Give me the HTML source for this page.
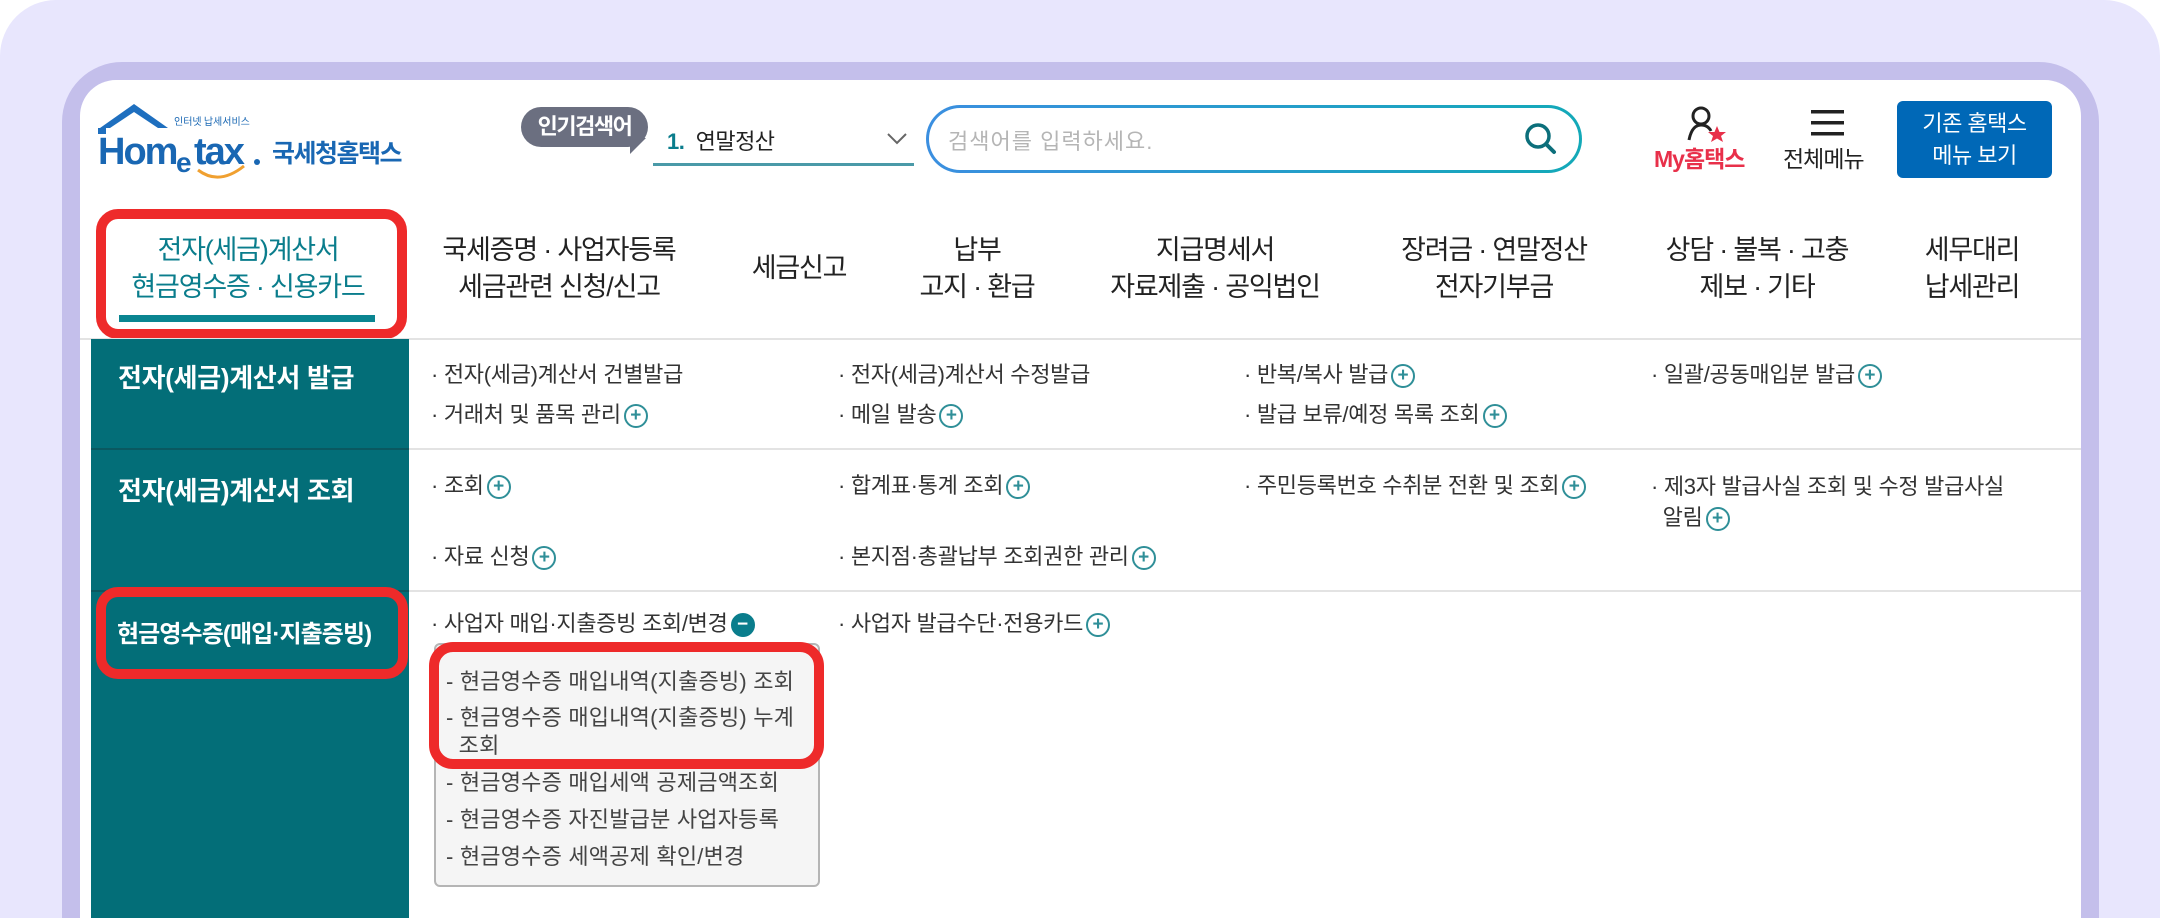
<!DOCTYPE html>
<html><head><meta charset="utf-8"><style>
*{margin:0;padding:0;box-sizing:border-box}
html,body{width:2160px;height:918px;overflow:hidden}
body{background:#fff;font-family:"Liberation Sans","Noto Sans CJK KR",sans-serif;position:relative}
#w{position:absolute;left:0;top:0;width:2160px;height:918px;overflow:hidden}
.a{position:absolute;white-space:nowrap}
.bg{left:0;top:0;width:2160px;height:918px;background:#e8e6fd;border-radius:56px 56px 0 0}
.frame{left:62px;top:62px;width:2037px;height:856px;background:#c4bfeb;border-radius:60px 60px 0 0}
.card{left:80px;top:80px;width:2001px;height:838px;background:#fff;border-radius:36px 36px 0 0}
.nav{font-size:27px;color:#222;text-align:center;line-height:37px;letter-spacing:-1.2px;transform:translateX(-50%)}
.side{left:91px;top:339px;width:318px;height:579px;background:#036e78}
.lbl{color:#fff;font-weight:bold;font-size:26px;letter-spacing:-0.3px}
.it{font-size:22px;color:#333;letter-spacing:-0.3px;line-height:30px}
.pl{display:inline-block;width:24px;height:24px;border:2px solid #2f8f98;border-radius:50%;color:#2f8f98;font-size:19px;line-height:20px;text-align:center;vertical-align:middle;margin-left:3px;letter-spacing:0;font-weight:bold}
.mi{background:#0a7d8c;color:#fff;border-color:#0a7d8c}
.hl{height:2px;background:#e3e3e3}
.sub{left:434px;top:643px;width:386px;height:244px;background:#f5f5f5;border:2px solid #b5b5b5;border-radius:6px}
.si{font-size:22px;color:#444;letter-spacing:0.2px;left:446px}
.red{border:10px solid #ee2a2a;border-radius:22px}
</style></head><body><div id="w">
<div class="a bg"></div>
<div class="a frame"></div>
<div class="a card"></div>

<svg class="a" style="left:94px;top:100px" width="330" height="84" viewBox="0 0 330 84">
<polygon points="6,28 40,4 74,28 64,28 40,12 16,28" fill="#1e6fbf"/>
<rect x="4" y="28" width="8" height="6" fill="#1e6fbf"/>
<text x="4" y="64" font-family="Liberation Sans" font-weight="bold" font-size="38" fill="#1967b3" letter-spacing="-2">Hom</text>
<text x="82" y="72" font-family="Liberation Sans" font-weight="bold" font-size="28" fill="#1967b3">e</text>
<text x="100" y="64" font-family="Liberation Sans" font-weight="bold" font-size="38" fill="#1967b3" letter-spacing="-2">tax</text>
<circle cx="163" cy="62" r="3" fill="#1967b3"/>
<path d="M104 70 Q125 86 150 66" stroke="#f0a030" stroke-width="3" fill="none"/>
<text x="80" y="25" font-family="Noto Sans CJK KR" font-size="10" fill="#1967b3">인터넷 납세서비스</text>
<text x="178" y="62" font-family="Noto Sans CJK KR" font-weight="bold" font-size="25" fill="#1967b3" letter-spacing="-1.5">국세청홈택스</text>
</svg>

<div class="a" style="left:521px;top:107px;width:127px;height:40px;background:#6b6f80;border-radius:20px;color:#fff;font-size:22px;font-weight:bold;text-align:center;line-height:40px;letter-spacing:-1.5px">인기검색어</div>
<div class="a" style="left:630px;top:138px;width:0;height:0;border-left:16px solid #6b6f80;border-bottom:16px solid transparent"></div>
<div class="a" style="left:667px;top:124px;font-size:22px;color:#222;letter-spacing:-0.5px"><b style="color:#0a7d8c">1.</b>&nbsp; 연말정산</div>
<svg class="a" style="left:886px;top:132px" width="22" height="14"><path d="M2 2 L11 11 L20 2" stroke="#666" stroke-width="2" fill="none"/></svg>
<div class="a" style="left:653px;top:163px;width:261px;height:3px;background:#4a9aa8"></div>

<div class="a" style="left:926px;top:105px;width:656px;height:68px;border-radius:34px;background:linear-gradient(90deg,#3b8fe0,#13a9b8);padding:3px"><div style="width:100%;height:100%;background:#fff;border-radius:31px"></div></div>
<div class="a" style="left:948px;top:124px;font-size:22px;color:#b5b5b5;letter-spacing:1px">검색어를 입력하세요.</div>
<svg class="a" style="left:1522px;top:120px" width="38" height="38"><circle cx="16" cy="16" r="11" stroke="#0c6f7b" stroke-width="3.5" fill="none"/><path d="M24 24 L32 32" stroke="#0c6f7b" stroke-width="4" stroke-linecap="round"/></svg>

<svg class="a" style="left:1686px;top:104px" width="44" height="42"><circle cx="15" cy="12" r="8" stroke="#222" stroke-width="3" fill="none"/><path d="M3 36 Q6 21 15 21 Q22 21 25 27" stroke="#222" stroke-width="3" fill="none"/><polygon points="31,22 33.5,28 40,28 35,32 37,38 31,34.5 25,38 27,32 22,28 28.5,28" fill="#e8304a"/></svg>
<div class="a" style="left:1654px;top:140px;font-size:23px;color:#e8304a;font-weight:bold;letter-spacing:-1px">My홈택스</div>
<svg class="a" style="left:1810px;top:108px" width="36" height="30"><rect x="1" y="2" width="33" height="3.5" fill="#222"/><rect x="1" y="13" width="33" height="3.5" fill="#222"/><rect x="1" y="24" width="33" height="3.5" fill="#222"/></svg>
<div class="a" style="left:1783px;top:140px;font-size:23px;color:#222;letter-spacing:-1px">전체메뉴</div>
<div class="a" style="left:1897px;top:101px;width:155px;height:77px;background:#0068b7;border-radius:6px;color:#fff;font-size:22px;text-align:center;line-height:32px;padding-top:7px;letter-spacing:-0.5px">기존 홈택스<br>메뉴 보기</div>

<div class="a nav" style="left:248px;top:232px;color:#0a7d8c">전자(세금)계산서<br>현금영수증 · 신용카드</div>
<div class="a" style="left:119px;top:315px;width:256px;height:7px;background:#0a8591"></div>
<div class="a red" style="left:96px;top:209px;width:311px;height:130px"></div>
<div class="a nav" style="left:559px;top:232px">국세증명 · 사업자등록<br>세금관련 신청/신고</div>
<div class="a nav" style="left:799px;top:250px">세금신고</div>
<div class="a nav" style="left:977px;top:232px">납부<br>고지 · 환급</div>
<div class="a nav" style="left:1215px;top:232px">지급명세서<br>자료제출 · 공익법인</div>
<div class="a nav" style="left:1494px;top:232px">장려금 · 연말정산<br>전자기부금</div>
<div class="a nav" style="left:1757px;top:232px">상담 · 불복 · 고충<br>제보 · 기타</div>
<div class="a nav" style="left:1972px;top:232px">세무대리<br>납세관리</div>

<div class="a hl" style="left:80px;top:338px;width:2001px"></div>
<div class="a side"></div>
<div class="a" style="left:91px;top:448px;width:318px;height:2px;background:#0a5860"></div>
<div class="a" style="left:91px;top:590px;width:318px;height:2px;background:#0a5860"></div>
<div class="a hl" style="left:409px;top:448px;width:1672px"></div>
<div class="a hl" style="left:409px;top:590px;width:1672px"></div>

<div class="a lbl" style="left:118px;top:358px">전자(세금)계산서 발급</div>
<div class="a lbl" style="left:118px;top:471px">전자(세금)계산서 조회</div>
<div class="a lbl" style="left:117px;top:614px;font-size:24px;letter-spacing:-0.9px">현금영수증(매입·지출증빙)</div>
<div class="a red" style="left:96px;top:587px;width:312px;height:92px"></div>

<div class="a it" style="left:431px;top:360px">· 전자(세금)계산서 건별발급</div>
<div class="a it" style="left:838px;top:360px">· 전자(세금)계산서 수정발급</div>
<div class="a it" style="left:1244px;top:360px">· 반복/복사 발급<span class="pl">+</span></div>
<div class="a it" style="left:1651px;top:360px">· 일괄/공동매입분 발급<span class="pl">+</span></div>
<div class="a it" style="left:431px;top:400px">· 거래처 및 품목 관리<span class="pl">+</span></div>
<div class="a it" style="left:838px;top:400px">· 메일 발송<span class="pl">+</span></div>
<div class="a it" style="left:1244px;top:400px">· 발급 보류/예정 목록 조회<span class="pl">+</span></div>
<div class="a it" style="left:431px;top:471px">· 조회<span class="pl">+</span></div>
<div class="a it" style="left:838px;top:471px">· 합계표·통계 조회<span class="pl">+</span></div>
<div class="a it" style="left:1244px;top:471px">· 주민등록번호 수취분 전환 및 조회<span class="pl">+</span></div>
<div class="a it" style="left:1651px;top:471px;line-height:31px">· 제3자 발급사실 조회 및 수정 발급사실<br>&nbsp;&nbsp;알림<span class="pl">+</span></div>
<div class="a it" style="left:431px;top:542px">· 자료 신청<span class="pl">+</span></div>
<div class="a it" style="left:838px;top:542px">· 본지점·총괄납부 조회권한 관리<span class="pl">+</span></div>
<div class="a it" style="left:431px;top:609px">· 사업자 매입·지출증빙 조회/변경<span class="pl mi">−</span></div>
<div class="a it" style="left:838px;top:609px">· 사업자 발급수단·전용카드<span class="pl">+</span></div>

<div class="a sub"></div>
<div class="a si" style="top:664px">- 현금영수증 매입내역(지출증빙) 조회</div>
<div class="a si" style="top:700px">- 현금영수증 매입내역(지출증빙) 누계</div>
<div class="a si" style="top:728px">&nbsp;&nbsp;조회</div>
<div class="a si" style="top:765px">- 현금영수증 매입세액 공제금액조회</div>
<div class="a si" style="top:802px">- 현금영수증 자진발급분 사업자등록</div>
<div class="a si" style="top:839px">- 현금영수증 세액공제 확인/변경</div>
<div class="a red" style="left:429px;top:642px;width:395px;height:127px;border-radius:24px"></div>
</div></body></html>
